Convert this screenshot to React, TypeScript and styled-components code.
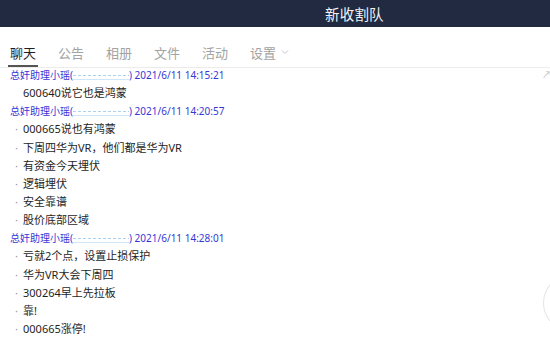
import styled, { createGlobalStyle } from "styled-components";

const GlobalStyle = createGlobalStyle`
  html, body {
    margin: 0;
    padding: 0;
    background: #fff;
    overflow: hidden;
  }
  body {
    font-family: "Noto Sans", "Noto Sans CJK SC", sans-serif;
  }
`;

type Msg = { text: string; bullet?: boolean };
type Group = { time: string; messages: Msg[] };

const groups: Group[] = [
  {
    time: "2021/6/11 14:15:21",
    messages: [{ text: "600640说它也是鸿蒙" }],
  },
  {
    time: "2021/6/11 14:20:57",
    messages: [
      { text: "000665说也有鸿蒙", bullet: true },
      { text: "下周四华为VR，他们都是华为VR", bullet: true },
      { text: "有资金今天埋伏", bullet: true },
      { text: "逻辑埋伏", bullet: true },
      { text: "安全靠谱", bullet: true },
      { text: "股价底部区域", bullet: true },
    ],
  },
  {
    time: "2021/6/11 14:28:01",
    messages: [
      { text: "亏就2个点，设置止损保护", bullet: true },
      { text: "华为VR大会下周四", bullet: true },
      { text: "300264早上先拉板", bullet: true },
      { text: "靠!", bullet: true },
      { text: "000665涨停!", bullet: true },
    ],
  },
];

const tabs = ["聊天", "公告", "相册", "文件", "活动", "设置"];

const App = () => {
  return (
    <Page>
      <GlobalStyle />
      <TitleBar>
        <Title>新收割队</Title>
      </TitleBar>
      <TabBar>
        {tabs.map((t, i) => (
          <Tab key={t} active={i === 0}>
            {t}
            {t === "设置" && (
              <Chevron viewBox="0 0 10 10">
                <path d="M2 3.5 L5 6.5 L8 3.5" fill="none" stroke="#c4c4c4" strokeWidth="1" />
              </Chevron>
            )}
          </Tab>
        ))}
      </TabBar>
      <MessageList>
        {groups.map((g) => (
          <div key={g.time}>
            <SenderLine>
              总奸助理小瑶(<Masked />) {g.time}
            </SenderLine>
            {g.messages.map((m) => (
              <MessageRow key={m.text}>
                <Bullet>{m.bullet ? "·" : ""}</Bullet>
                {m.text}
              </MessageRow>
            ))}
          </div>
        ))}
      </MessageList>
      <CornerMark>↗</CornerMark>
      <SideButton />
    </Page>
  );
};

export default App;

const Page = styled.div`
  position: relative;
  width: 550px;
  height: 338px;
  overflow: hidden;
  background: #fff;
`;

const TitleBar = styled.div`
  height: 27px;
  background: #212a40;
  display: flex;
  align-items: center;
  padding-left: 325px;
`;

const Title = styled.div`
  color: #f2f3f6;
  font-family: "Noto Sans CJK SC", sans-serif;
  font-size: 14.5px;
  line-height: 25px;
  letter-spacing: 0.2px;
`;

const TabBar = styled.div`
  position: relative;
  z-index: 1;
  height: 40px;
  display: flex;
  align-items: flex-end;
  gap: 18px;
  padding-left: 8px;
  border-bottom: 1px solid #ececec;
  background: #fff;
`;

const Tab = styled.div<{ active?: boolean }>`
  display: flex;
  align-items: center;
  height: 18px;
  padding: 0 2px 4px;
  font-family: "Noto Sans CJK SC", sans-serif;
  font-size: 13px;
  color: ${({ active }) => (active ? "#1e1e1e" : "#a3a3a3")};
  border-bottom: 2px solid ${({ active }) => (active ? "#555" : "transparent")};
`;

const Chevron = styled.svg`
  width: 10px;
  height: 10px;
  margin-left: 4px;
`;

const MessageList = styled.div`
  margin-top: -2px;
`;

const SenderLine = styled.div`
  height: 18.15px;
  line-height: 18.15px;
  padding-left: 10px;
  font-size: 10px;
  color: #3636d6;
  white-space: nowrap;
  font-family: "Noto Sans", "Noto Sans CJK SC", sans-serif;
`;

const Masked = styled.span`
  display: inline-block;
  width: 56px;
  height: 9px;
  vertical-align: -1px;
  background: repeating-linear-gradient(
      90deg,
      #a9d3f2 0 3px,
      transparent 3px 5px
    )
    left 60% / 100% 1px no-repeat;
  border-bottom: 1px solid #cfe6f8;
`;

const MessageRow = styled.div`
  height: 18.15px;
  line-height: 18.15px;
  display: flex;
  align-items: center;
  font-size: 11px;
  color: #1e1e1e;
  white-space: nowrap;
  font-family: "Noto Sans", "Noto Sans CJK SC", sans-serif;
`;

const Bullet = styled.span`
  width: 23px;
  padding-left: 15px;
  box-sizing: border-box;
  color: #999;
  font-size: 11px;
`;

const CornerMark = styled.div`
  position: absolute;
  right: 0;
  top: 68px;
  width: 8px;
  font-size: 9px;
  color: #bbb;
  overflow: hidden;
`;

const SideButton = styled.div`
  position: absolute;
  left: 543px;
  top: 278px;
  width: 40px;
  height: 48px;
  border: 1px solid #e4e4e4;
  border-radius: 50%;
  background: #fff;
`;
